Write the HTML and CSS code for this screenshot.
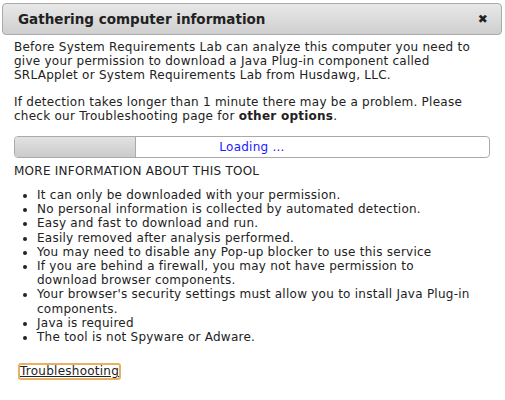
FILE: index.html
```html
<!DOCTYPE html>
<html>
<head>
<meta charset="utf-8">
<link rel="stylesheet" href="styles.css">
</head>
<body>
<div class="dialog">
  <div class="titlebar">
    <span class="title">Gathering computer information</span>
    <span class="close">&#x2716;</span>
  </div>
  <div class="content">
    <p class="para">Before System Requirements Lab can analyze this computer you need to give your permission to download a Java Plug-in component called SRLApplet or System Requirements Lab from Husdawg, LLC.</p>
    <p class="para">If detection takes longer than 1 minute there may be a problem. Please check our Troubleshooting page for <b>other options</b>.</p>
    <div class="progress">
      <div class="progress-fill"></div>
      <div class="progress-label">Loading ...</div>
    </div>
    <div class="more">MORE INFORMATION ABOUT THIS TOOL</div>
    <ul class="list">
      <li>It can only be downloaded with your permission.</li>
      <li>No personal information is collected by automated detection.</li>
      <li>Easy and fast to download and run.</li>
      <li>Easily removed after analysis performed.</li>
      <li>You may need to disable any Pop-up blocker to use this service</li>
      <li>If you are behind a firewall, you may not have permission to<br>download browser components.</li>
      <li>Your browser's security settings must allow you to install Java Plug-in components.</li>
      <li>Java is required</li>
      <li>The tool is not Spyware or Adware.</li>
    </ul>
    <div class="actions"><a class="trouble" href="#">Troubleshooting</a></div>
  </div>
</div>
</body>
</html>
```
FILE: styles.css
```css
html, body {
  margin: 0;
  padding: 0;
  background: #fff;
}
body {
  width: 505px;
  height: 400px;
  overflow: hidden;
  font-family: "DejaVu Sans", Verdana, sans-serif;
  font-size: 12px;
  letter-spacing: 0.25px;
  color: #222;
}
.dialog {
  padding: 3px 3px 0 2px;
}
.titlebar {
  height: 30px;
  border: 1px solid #aaa;
  border-radius: 4px;
  background: linear-gradient(#e8e8e8, #cfcfcf);
  display: flex;
  align-items: center;
  justify-content: space-between;
  padding: 0 13px 0 15px;
}
.title {
  font-weight: bold;
  font-size: 13.5px;
  letter-spacing: 0;
  color: #222;
}
.close {
  font-size: 12px;
  color: #222;
}
.content {
  padding: 5px 12px 0 12px;
  width: 476px;
}
.para {
  margin: 0 0 13px 0;
  line-height: 14px;
}
.progress {
  position: relative;
  box-sizing: border-box;
  height: 22px;
  border: 1px solid #aaa;
  border-radius: 4px;
  overflow: hidden;
  width: 476px;
}
.progress-fill {
  width: 120px;
  height: 100%;
  background: linear-gradient(#e2e2e2, #cbcbcb);
  border-right: 1px solid #aaa;
}
.progress-label {
  position: absolute;
  inset: 0;
  text-align: center;
  line-height: 20px;
  font-size: 12px;
  color: #1a1aff;
}
.more {
  margin-top: 6px;
  line-height: 14px;
}
.list {
  margin: 10px 0 0 0;
  padding: 0 12px 0 23px;
  line-height: 14.2px;
}
.actions {
  margin-top: 19px;
  padding-left: 4px;
}
.trouble {
  display: inline-block;
  color: #222;
  text-decoration: underline;
  border: 2px solid #e8b060;
  border-radius: 3px;
  padding: 0;
  line-height: 13px;
}
```
